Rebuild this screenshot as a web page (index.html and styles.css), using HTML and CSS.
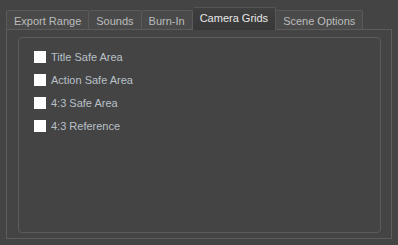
FILE: index.html
```html
<!DOCTYPE html>
<html lang="en">
<head>
    <meta charset="UTF-8">
    <title>Export Settings</title>
    <link rel="stylesheet" href="styles.css">
</head>
<body>
    <div class="tabs">
        <div class="tab">Export Range</div>
        <div class="tab">Sounds</div>
        <div class="tab">Burn-In</div>
        <div class="tab active">Camera Grids</div>
        <div class="tab">Scene Options</div>
    </div>

    <div class="pane">
        <div class="group">
            <label class="check-row"><span class="box"></span>Title Safe Area</label>
            <label class="check-row"><span class="box"></span>Action Safe Area</label>
            <label class="check-row"><span class="box"></span>4:3 Safe Area</label>
            <label class="check-row"><span class="box"></span>4:3 Reference</label>
        </div>
    </div>
</body>
</html>
```

FILE: styles.css
```css
body {
    margin: 0;
    background-color: #444444;
    font-family: "Liberation Sans", Arial, sans-serif;
    font-size: 11px;
    color: #c4c4c4;
}
.tabs {
    display: flex;
    align-items: flex-end;
    padding: 7px 0 0 6px;
    height: 22px;
}
.tab {
    box-sizing: border-box;
    height: 19px;
    padding: 0 7px;
    line-height: 20px;
    background-color: #4a4a4a;
    border: 1px solid #5a5a5a;
    border-bottom: none;
    border-left: none;
    border-radius: 2px 2px 0 0;
    color: #bcbcbc;
}
.tab:first-child {
    border-left: 1px solid #5a5a5a;
}
.tab.active {
    height: 23px;
    line-height: 21px;
    margin-bottom: -1px;
    position: relative;
    background: linear-gradient(#3f3f3f, #383838);
    border-color: #555555;
    color: #e8e8e8;
}
.pane {
    box-sizing: border-box;
    height: 210px;
    margin: 0 6px;
    border: 1px solid #5c5c5c;
    padding: 7px 10px 5px 11px;
}
.group {
    box-sizing: border-box;
    height: 196px;
    border: 1px solid #5c5c5c;
    border-radius: 4px;
    padding: 7px 0 0 15px;
}
.check-row {
    display: flex;
    align-items: center;
    height: 23px;
    color: #b9c0c8;
}
.box {
    width: 12px;
    height: 12px;
    background-color: #ffffff;
    margin-right: 5px;
}
```
